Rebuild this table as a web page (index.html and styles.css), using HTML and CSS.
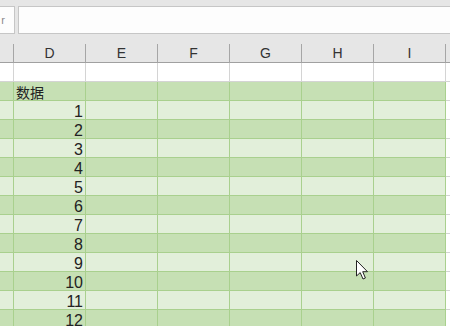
FILE: index.html
```html
<!DOCTYPE html>
<html>
<head>
<meta charset="utf-8">
<link rel="stylesheet" href="styles.css">
</head>
<body>
<div class="app">
  <div class="topbar">
    <div class="namebox"><span class="nb-text">r</span></div>
    <div class="formula"></div>
  </div>
  <div class="grid">
    <div class="hd c"></div><div class="hd">D</div><div class="hd">E</div><div class="hd">F</div><div class="hd">G</div><div class="hd">H</div><div class="hd">I</div><div class="hd j"></div>
  </div>
  <div class="grid rows" id="rows"></div>
  <svg class="cursor" width="14" height="22" viewBox="0 0 14 22">
    <path d="M1.5 1.5 L1.5 17 L5.2 13.6 L8 20 L10.4 19 L7.7 12.7 L12.5 12.7 Z" fill="#fff" stroke="#222" stroke-width="1" stroke-linejoin="round"/>
  </svg>
</div>
<script src="script.js"></script>
</body>
</html>
```
FILE: script.js
```js
const rows = document.getElementById('rows');
const data = [null, '数据'];
for (let i = 1; i <= 12; i++) data.push(i);
data.forEach((v, idx) => {
  const cls = idx === 0 ? 'w' : (idx % 2 === 1 ? 'g' : 'l');
  let html = `<div class="cell c ${cls}"></div>`;
  if (v === null) html += `<div class="cell ${cls}"></div>`;
  else if (typeof v === 'string') html += `<div class="cell ${cls} txt">${v}</div>`;
  else html += `<div class="cell ${cls} num">${v}</div>`;
  for (let k = 0; k < 5; k++) html += `<div class="cell ${cls}"></div>`;
  html += `<div class="cell j w"></div>`;
  rows.insertAdjacentHTML('beforeend', html);
});
```
FILE: styles.css
```css
html, body { margin: 0; padding: 0; }
body {
  width: 450px; height: 326px; overflow: hidden;
  background: #fff;
  font-family: "Liberation Sans", "Noto Sans CJK SC", sans-serif;
  color: #222;
}
.app { position: relative; width: 450px; height: 326px; overflow: hidden; }
.topbar {
  height: 44px; background: #e6e6e6;
  display: flex; align-items: flex-start; padding-top: 6px; box-sizing: border-box;
}
.namebox {
  width: 16px; height: 28px; margin-left: -1px; box-sizing: border-box;
  border: 1px solid #c6c6c6; border-left: none; background: #fdfdfd;
  display: flex; align-items: center; justify-content: flex-end; overflow: hidden;
}
.nb-text { color: #8a8a8a; font-size: 11px; margin-right: 9px; }
.formula {
  margin-left: 3px; flex: 1; height: 28px; box-sizing: border-box;
  border: 1px solid #c6c6c6; border-right: none; background: #fdfdfd;
}
.grid {
  display: grid;
  grid-template-columns: 14px 72px 72px 72px 72px 72px 72px 10px;
}
.hd {
  height: 19px; box-sizing: border-box; background: #e6e6e6;
  border-right: 1px solid #a6a6a6; border-bottom: 1px solid #a0a0a0;
  font-size: 14px; line-height: 19px; text-align: center; color: #333;
}
.hd.j { border-right: none; }
.cell {
  height: 19px; box-sizing: border-box;
  border-right: 1px solid #a9d08e; border-bottom: 1px solid #a9d08e;
  font-size: 15px; line-height: 19px; white-space: nowrap; overflow: hidden;
}
.cell.g { background: #c6e0b4; }
.cell.l { background: #e2efda; }
.cell.w { background: #fff; border-color: #d4d4d4; }
.cell.j { border-right: none; }
.num {
  text-align: right; padding-right: 2px;
  font-family: "Liberation Sans Narrow", "Liberation Sans", sans-serif; font-size: 16px;
  line-height: 22px;
}
.txt { padding-left: 2px; font-family: "Noto Sans CJK SC", sans-serif; font-size: 14px; line-height: 20px; }
.cursor { position: absolute; left: 355px; top: 259px; }
```
